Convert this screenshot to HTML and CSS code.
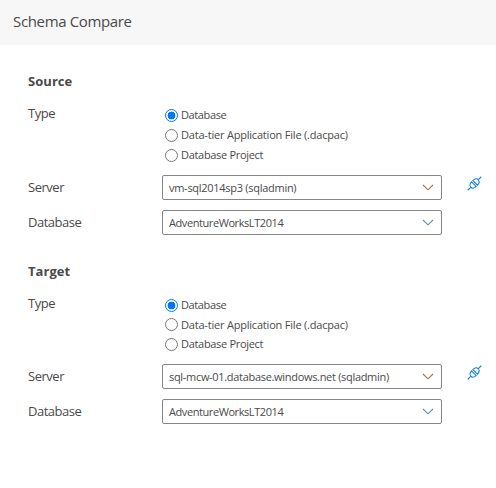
FILE: index.html
```html
<!DOCTYPE html>
<html lang="en">
<head>
<meta charset="utf-8">
<title>Schema Compare</title>
<link rel="stylesheet" href="styles.css">
</head>
<body>
<svg class="defs" width="0" height="0" aria-hidden="true">
  <symbol id="plug" viewBox="0 0 16 16">
    <g fill="none" stroke="currentColor" stroke-width="1.15">
      <path d="M.8 15.2 3.9 12.1M12.1 3.9 15.2.8"/>
      <path d="M4.9 6.3 9.7 11.1 8.2 12.4Q5.9 13.8 4 12 2.2 10.1 3.6 7.8Z"/>
      <path d="M6.3 4.9 11.1 9.7 12.4 8.2Q13.8 5.9 12 4 10.1 2.2 7.8 3.6Z"/>
    </g>
  </symbol>
  <symbol id="chevron" viewBox="0 0 12 7">
    <path d="M1 1 6 5.8 11 1" fill="none" stroke="currentColor" stroke-width="1.1"/>
  </symbol>
</svg>
<header class="header"><h1>Schema Compare</h1></header>
<main>
  <section class="source">
    <h2>Source</h2>
    <div class="row types">
      <span class="label type">Type</span>
      <div class="options">
        <label><input type="radio" name="source" checked><span class="t-db">Database</span></label>
        <label><input type="radio" name="source"><span class="t-file">Data-tier Application File (.dacpac)</span></label>
        <label><input type="radio" name="source"><span class="t-project">Database Project</span></label>
      </div>
    </div>
    <div class="row">
      <span class="label">Server</span>
      <div class="select orange"><span class="t-vm">vm-sql2014sp3 (sqladmin)</span><svg><use href="#chevron"/></svg></div>
      <svg class="plug"><use href="#plug"/></svg>
    </div>
    <div class="row">
      <span class="label">Database</span>
      <div class="select"><span class="t-aw">AdventureWorksLT2014</span><svg><use href="#chevron"/></svg></div>
    </div>
  </section>
  <section class="target">
    <h2>Target</h2>
    <div class="row types">
      <span class="label type">Type</span>
      <div class="options">
        <label><input type="radio" name="target" checked><span class="t-db">Database</span></label>
        <label><input type="radio" name="target"><span class="t-file">Data-tier Application File (.dacpac)</span></label>
        <label><input type="radio" name="target"><span class="t-project">Database Project</span></label>
      </div>
    </div>
    <div class="row">
      <span class="label">Server</span>
      <div class="select orange"><span class="t-mcw">sql-mcw-01.database.windows.net (sqladmin)</span><svg><use href="#chevron"/></svg></div>
      <svg class="plug"><use href="#plug"/></svg>
    </div>
    <div class="row">
      <span class="label">Database</span>
      <div class="select"><span class="t-aw">AdventureWorksLT2014</span><svg><use href="#chevron"/></svg></div>
    </div>
  </section>
</main>
</body>
</html>
```
FILE: styles.css
```css
* { box-sizing: border-box; }
body {
  margin: 0;
  background: #fff;
  color: #4a4a4a;
  font-family: "Open Sans", "Noto Sans", sans-serif;
  font-size: 11px;
  white-space: nowrap;
  overflow: hidden;
}
.defs { display: block; height: 0; }
.header {
  height: 45px;
  padding-left: 13px;
  background: #f7f7f7;
}
h1 {
  margin: 0;
  font-size: 15px;
  font-weight: 400;
  line-height: 43px;
  letter-spacing: -.35px;
}
main { padding: 25px 0 0 28px; }
section { height: 190px; }
h2 {
  margin: 0;
  height: 34px;
  font-size: 13px;
  font-weight: 700;
  line-height: 22px;
  letter-spacing: .05px;
}
.row {
  display: flex;
  height: 25px;
  margin-bottom: 10px;
}
.types { height: 61px; }
.label {
  width: 134px;
  font-size: 13px;
  line-height: 24px;
  letter-spacing: -.48px;
}
.type { line-height: 18px; }
.options { padding: 1px 0 0 3px; }
.options label {
  display: flex;
  align-items: center;
  height: 20px;
}
.options span { padding-bottom: 1px; line-height: 15px; }
.t-db { letter-spacing: -.38px; }
.t-file { letter-spacing: -.2px; }
.t-project { letter-spacing: -.31px; }
.t-vm { letter-spacing: -.28px; }
.t-mcw { letter-spacing: -.31px; }
.t-aw { letter-spacing: -.42px; }
input {
  appearance: none;
  width: 13px;
  height: 13px;
  margin: 0 3px 0 0;
  border: 1px solid #767676;
  border-radius: 50%;
  background: #fff;
}
input:checked {
  border-color: #0075ff;
  background: radial-gradient(circle, #0075ff 3.6px, #fff 4.2px);
}
.select {
  display: flex;
  align-items: center;
  justify-content: space-between;
  width: 280px;
  height: 25px;
  padding: 0 7px 0 6px;
  border: 1px solid #868686;
  border-radius: 2px;
}
.select svg { width: 12px; height: 7px; color: #5b8cc0; }
.orange svg { color: #b0703f; }
.plug {
  width: 15px;
  height: 15px;
  margin: 1px 0 0 25px;
  color: #1580d8;
}
.target .types { height: 60px; }
.target label:nth-child(2) { height: 19px; }
.target label:nth-child(2) span { padding-bottom: 0; }
```
